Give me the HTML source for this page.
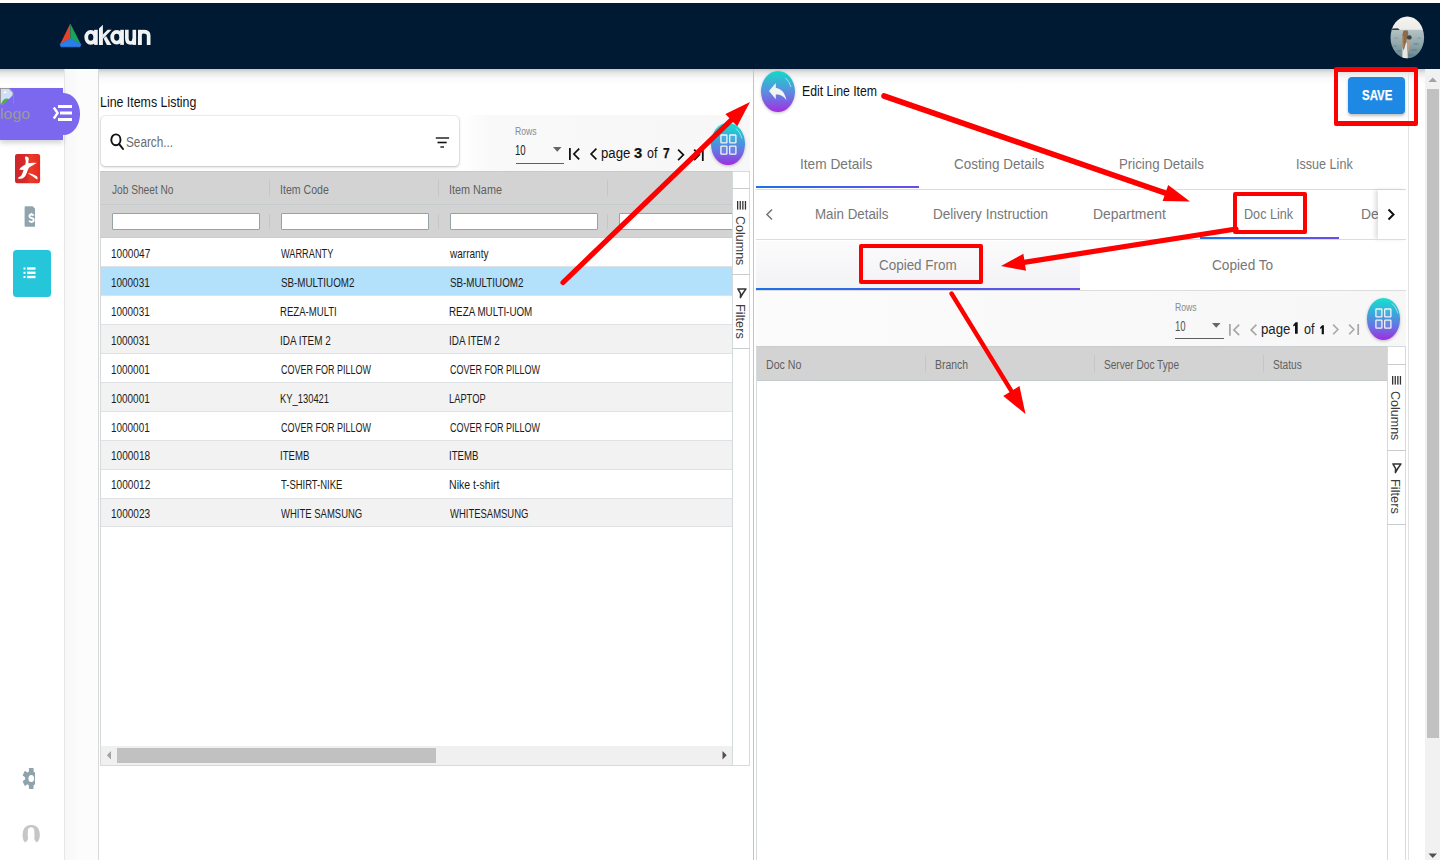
<!DOCTYPE html><html><head><meta charset="utf-8"><style>
html,body{margin:0;padding:0;width:1440px;height:860px;overflow:hidden;background:#fff;font-family:"Liberation Sans",sans-serif;}
body{position:relative;}
</style></head><body>
<div style="position:absolute;left:0px;top:3px;width:1440px;height:66px;background:#011a33;"></div>
<div style="position:absolute;left:0px;top:69px;width:1440px;height:16px;background:linear-gradient(rgba(0,0,0,.22),rgba(0,0,0,.09) 25%,rgba(0,0,0,.02) 60%,rgba(0,0,0,0));"></div>
<svg style="position:absolute;left:58px;top:21px;overflow:visible;" width="26" height="28" viewBox="0 0 26 28">
<polygon points="12.3,2.5 2.1,23.3 12.3,17.8" fill="#e4432b"/>
<polygon points="12.3,2.5 22.9,23.3 12.3,17.8" fill="#1aa35e"/>
<polygon points="2.1,23.3 12.3,17.8 22.9,23.3 22,25.8 3,25.8" fill="#2b7de8" stroke="#2b7de8" stroke-width="0.8" stroke-linejoin="round"/>
</svg>
<svg style="position:absolute;left:0px;top:0px;overflow:visible;" width="1" height="1" viewBox="0 0 1 1"><g fill="none" stroke="#f2f2f2" stroke-width="3.8">
<ellipse cx="90.75" cy="37.35" rx="4.5" ry="5.4"/>
<ellipse cx="116.7" cy="37.3" rx="4.5" ry="5.35"/>
<path d="M126.85 29.8 V38.6 Q126.85 43.05 130.6 43.05 Q134.3 43.05 134.3 38.6" stroke-width="3.6"/>
<path d="M139.8 45 V35.6 Q139.8 31.7 143.4 31.7 Q148.65 31.7 148.65 35.6 V45" stroke-width="3.7"/>
</g><g fill="#f2f2f2">
<rect x="94.1" y="29.8" width="3.65" height="15.1"/>
<polygon points="99,28.6 102.9,24.7 102.9,44.9 99,44.9"/>
<polygon points="102.6,34.8 107.6,29.8 111.6,29.8 102.6,38.9"/>
<polygon points="103.6,38.6 106,36 111.5,44.9 106.9,44.9"/>
<rect x="120.2" y="29.8" width="3.7" height="15.1"/>
<rect x="132.5" y="29.8" width="3.6" height="15.1"/>
<rect x="138" y="29.8" width="3.6" height="15.1"/>
</g></svg>
<svg style="position:absolute;left:1390px;top:16px;overflow:visible;" width="35" height="43" viewBox="0 0 35 43">
<defs><clipPath id="av"><ellipse cx="17.3" cy="21.4" rx="16.8" ry="20.9"/></clipPath>
<linearGradient id="sea" x1="0" y1="0" x2="0" y2="1"><stop offset="0" stop-color="#b4c3c5"/><stop offset="0.45" stop-color="#93a9ad"/><stop offset="1" stop-color="#62808a"/></linearGradient>
<linearGradient id="sky" x1="0" y1="0" x2="0" y2="1"><stop offset="0" stop-color="#f6f4ef"/><stop offset="1" stop-color="#ecebe7"/></linearGradient></defs>
<g clip-path="url(#av)">
<rect x="0" y="0" width="35" height="14" fill="url(#sky)"/>
<rect x="0" y="13.8" width="35" height="30" fill="url(#sea)"/>
<g fill="#5f7d86" opacity="0.55"><ellipse cx="5" cy="30" rx="2.5" ry="0.8"/><ellipse cx="26" cy="28" rx="3" ry="0.9"/><ellipse cx="9" cy="35" rx="3" ry="1"/><ellipse cx="24" cy="34" rx="3.5" ry="1"/><ellipse cx="20" cy="39" rx="4" ry="1.1"/><ellipse cx="29" cy="22" rx="2" ry="0.6"/><ellipse cx="6" cy="22" rx="2" ry="0.6"/></g>
<path d="M1.5 13.9 L2.5 12.6 L8 12.3 L9.8 13.9 Z" fill="#33403c"/>
<path d="M12.8 27 L17.1 27 L17.8 43 L12.2 43 Z" fill="#e9e5e1"/>
<path d="M17 22 Q19.2 24 19.6 26.5 L18.6 35 L17 34 Z" fill="#c49c7c"/>
<path d="M13.3 15 Q15 13.6 17.6 14.5 Q18.6 16 18.1 19 L16.6 24 Q15.2 30 13.6 34.5 Q11.8 30 12 24 Q12.2 18 13.3 15 Z" fill="#8c6c4c"/>
<path d="M12.8 20 Q12.5 26 13.2 31" fill="none" stroke="#c7a47c" stroke-width="0.8"/>
<ellipse cx="19.3" cy="21.4" rx="2.4" ry="2.2" fill="#3a4446"/>
</g></svg>
<div style="position:absolute;left:64px;top:69px;width:1px;height:791px;background:#e6e6e6;"></div>
<div style="position:absolute;left:65px;top:69px;width:33px;height:791px;background:linear-gradient(to right,#f7f7f7,#fdfdfd 55%,#fcfcfc);"></div>
<div style="position:absolute;left:98px;top:69px;width:1px;height:791px;background:#d8d8d8;"></div>
<div style="position:absolute;left:0px;top:88px;width:63px;height:52px;background:#7b68ee;box-shadow:0 3px 5px rgba(0,0,0,.18);"></div>
<div style="position:absolute;left:46.5px;top:93px;width:33px;height:41.5px;border-radius:50%;background:#7b68ee;"></div>
<svg style="position:absolute;left:0px;top:88px;overflow:visible;" width="14" height="17" viewBox="0 0 14 17"><path d="M0.5 0.5 H9 L13 4.5 V16 H0.5 Z" fill="#cfdff5" stroke="#9a9a9a" stroke-width="1"/>
<path d="M1 16 Q4 9 9 11 L13 14 V16 Z" fill="#4caf50"/><path d="M3 5 L5 3 L7 5 Z" fill="#fff"/><path d="M3 17 L13 7 V17 Z" fill="#7b68ee"/></svg>
<div style="position:absolute;left:-0.43px;top:104.60px;font-family:'Liberation Sans',sans-serif;font-size:15.41px;line-height:17px;font-weight:400;color:#9a9a9a;white-space:nowrap;transform:scaleX(1.0327);transform-origin:0 0;">logo</div>
<svg style="position:absolute;left:52px;top:104px;overflow:visible;" width="22" height="18" viewBox="0 0 22 18"><path d="M1.8 3.5 L5.6 9 L1.8 14.5" fill="none" stroke="#fff" stroke-width="2.4"/>
<rect x="6" y="1" width="14" height="3" fill="#fff"/><rect x="8" y="7.5" width="12" height="3" fill="#fff"/><rect x="6" y="14" width="14" height="3" fill="#fff"/></svg>
<svg style="position:absolute;left:15.2px;top:154px;overflow:visible;" width="26" height="30" viewBox="0 0 26 30"><defs><linearGradient id="rg" x1="0" y1="0" x2="1" y2="0"><stop offset="0" stop-color="#cc262d"/><stop offset="0.45" stop-color="#d72a28"/><stop offset="0.62" stop-color="#ec3a28"/><stop offset="1" stop-color="#e52a20"/></linearGradient></defs>
<rect x="0" y="0" width="25.1" height="29.2" rx="2.2" fill="url(#rg)"/>
<path d="M10.6 2.4 C12.5 2.2 14.2 3.4 13.8 5.2 C13.5 6.5 13.2 8 13.6 9.3 C16 8.6 19 8.5 21.8 9.0 C19.5 10.5 16.5 11.8 14.2 13.6 C12.8 15.5 12.2 18 11.2 20.2 C10.2 22.5 8.5 24.6 6.2 24.8 C4.8 24.9 3.6 24.7 2.9 24.4 C3.5 23.2 4.6 22.6 5.8 22.3 C7.2 20.2 8 18 8.6 15.8 C7.2 16 5.6 15.8 4.2 15.4 C6 13.2 8.2 11.8 10.3 10.6 C10.8 8.5 11 6.5 10.2 5 C9.8 4 9.9 3 10.6 2.4 Z" fill="#fff"/>
<path d="M12.8 19.2 C16 19.2 19.8 20.5 22 22.5 C22.8 23.5 22.8 24.8 22.2 25.6 C19 23.5 16 21 12.8 19.2 Z" fill="#fff"/></svg>
<svg style="position:absolute;left:24px;top:206px;overflow:visible;" width="12" height="21" viewBox="0 0 12 21"><path d="M1.8 0.2 H8.6 L11 2.6 V20.8 H1.8 Q0.6 20.8 0.6 19.6 V1.4 Q0.6 0.2 1.8 0.2 Z" fill="#91a4ae"/>
<path d="M9.7 9.6 Q9.2 8.5 7.5 8.5 Q5.4 8.5 5.4 10.2 Q5.4 11.6 7.5 12 Q9.8 12.4 9.8 14.1 Q9.8 15.8 7.5 15.8 Q5.7 15.8 5.1 14.6" fill="none" stroke="#fff" stroke-width="1.8"/>
<rect x="6.8" y="6.9" width="1.5" height="2" fill="#fff"/><rect x="6.8" y="15.4" width="1.5" height="1.6" fill="#fff"/></svg>
<div style="position:absolute;left:13px;top:250px;width:38px;height:46.5px;background:#26c6da;border-radius:3.5px;"></div>
<svg style="position:absolute;left:23px;top:267px;overflow:visible;" width="13" height="12" viewBox="0 0 13 12"><rect x="0.5" y="0.5" width="2" height="2" fill="#fff"/><rect x="0.5" y="4.8" width="2" height="2" fill="#fff"/><rect x="0.5" y="9" width="2" height="2" fill="#fff"/>
<rect x="4" y="0.3" width="8.5" height="2.4" fill="#fff"/><rect x="4" y="4.6" width="8.5" height="2.4" fill="#fff"/><rect x="4" y="8.8" width="8.5" height="2.4" fill="#fff"/></svg>
<svg style="position:absolute;left:0px;top:0px;overflow:visible;" width="1" height="1" viewBox="0 0 1 1"><defs><clipPath id="gc"><rect x="15" y="760" width="19.9" height="40"/></clipPath></defs>
<g clip-path="url(#gc)"><g transform="translate(31.25,778.4) scale(0.83,1)" fill="#8fa3ad">
<circle cx="0" cy="0" r="7.4"/>
<rect x="-2.8" y="-10.5" width="5.6" height="5" rx="0.6"/>
<rect x="-2.8" y="-10.5" width="5.6" height="5" rx="0.6" transform="rotate(60)"/>
<rect x="-2.8" y="-10.5" width="5.6" height="5" rx="0.6" transform="rotate(120)"/>
<rect x="-2.8" y="-10.5" width="5.6" height="5" rx="0.6" transform="rotate(180)"/>
<rect x="-2.8" y="-10.5" width="5.6" height="5" rx="0.6" transform="rotate(240)"/>
<rect x="-2.8" y="-10.5" width="5.6" height="5" rx="0.6" transform="rotate(300)"/>
<ellipse cx="0" cy="0.1" rx="3.4" ry="3.6" fill="#fff"/>
</g></g></svg>
<svg style="position:absolute;left:18px;top:820px;overflow:visible;" width="26" height="28" viewBox="0 0 26 28"><path d="M7 22.6 C4.5 20 4.4 16 4.7 13 C5.5 7 9 5 13.2 5 C17.5 5 21 7 21.7 13 C22 16 21.8 20 19 22.6 C17 21 15.6 19 16.5 16.5 C16.3 13 16.3 11 16.2 10 C15.8 8 14.8 7.2 13.2 7.2 C11.5 7.2 10.2 8 9.9 10 C9.8 11 9.8 13 9.8 16.5 C10.7 19 9.5 21 7 22.6 Z" fill="#c6c6c6"/></svg>
<div style="position:absolute;left:99.91px;top:94.10px;font-family:'Liberation Sans',sans-serif;font-size:14.24px;line-height:16px;font-weight:400;color:#111;white-space:nowrap;transform:scaleX(0.8699);transform-origin:0 0;">Line Items Listing</div>
<div style="position:absolute;left:100px;top:115px;width:650px;height:56px;background:linear-gradient(to right,#fff 360px,#f9f9f9 390px,#f7f7f7);"></div>
<div style="position:absolute;left:101px;top:116px;width:358px;height:50px;background:#fff;border-radius:4.5px;box-shadow:0 0 0 1px rgba(0,0,0,.05),0 1px 3px rgba(0,0,0,.22);"></div>
<svg style="position:absolute;left:110px;top:133px;overflow:visible;" width="16" height="18" viewBox="0 0 16 18"><ellipse cx="5.9" cy="6.8" rx="4.6" ry="5.4" fill="none" stroke="#111" stroke-width="1.9"/><path d="M9.2 11.2 L13 16" stroke="#111" stroke-width="2" stroke-linecap="round"/></svg>
<div style="position:absolute;left:125.87px;top:133.70px;font-family:'Liberation Sans',sans-serif;font-size:14.53px;line-height:16px;font-weight:400;color:#6b6b6b;white-space:nowrap;transform:scaleX(0.8099);transform-origin:0 0;">Search...</div>
<svg style="position:absolute;left:435px;top:136px;overflow:visible;" width="15" height="13" viewBox="0 0 15 13"><rect x="0.8" y="1.2" width="13.3" height="1.6" fill="#333"/><rect x="2.5" y="5.7" width="9.2" height="1.6" fill="#111"/><rect x="5.4" y="10.2" width="3.6" height="1.6" fill="#333"/></svg>
<div style="position:absolute;left:515.31px;top:126.10px;font-family:'Liberation Sans',sans-serif;font-size:10.32px;line-height:11px;font-weight:400;color:#8a8a8a;white-space:nowrap;transform:scaleX(0.8410);transform-origin:0 0;">Rows</div>
<div style="position:absolute;left:515.28px;top:141.90px;font-family:'Liberation Sans',sans-serif;font-size:14.39px;line-height:16px;font-weight:400;color:#222;white-space:nowrap;transform:scaleX(0.6672);transform-origin:0 0;">10</div>
<div style="position:absolute;left:516px;top:162.9px;width:48.3px;height:1.2px;background:#5f5f5f;"></div>
<svg style="position:absolute;left:552.7px;top:147.2px;overflow:visible;" width="9" height="5" viewBox="0 0 9 5"><path d="M0 0 H8.5 L4.25 4.7 Z" fill="#666"/></svg>
<svg style="position:absolute;left:569.4px;top:148.3px;overflow:visible;" width="12" height="12.0" viewBox="0 0 12 12.0"><path d="M0.9 0 V12.0" stroke="#111" stroke-width="1.8"/><path d="M10.2 0.6 L4.9 6.0 L10.2 11.4" fill="none" stroke="#111" stroke-width="1.7"/></svg>
<svg style="position:absolute;left:589.5px;top:148.3px;overflow:visible;" width="8" height="12.0" viewBox="0 0 8 12.0"><path d="M6.4 0.6 L1.1 6.0 L6.4 11.4" fill="none" stroke="#111" stroke-width="1.7"/></svg>
<div style="position:absolute;left:601.34px;top:145.30px;font-family:'Liberation Sans',sans-serif;font-size:14.39px;line-height:16px;font-weight:400;color:#111;white-space:nowrap;transform:scaleX(0.9165);transform-origin:0 0;">page</div>
<div style="position:absolute;left:633.53px;top:145.30px;font-family:'Liberation Sans',sans-serif;font-size:14.39px;line-height:16px;font-weight:700;color:#111;white-space:nowrap;transform:scaleX(1.0249);transform-origin:0 0;-webkit-text-stroke:0.25px #111;">3</div>
<div style="position:absolute;left:646.80px;top:145.30px;font-family:'Liberation Sans',sans-serif;font-size:14.83px;line-height:16px;font-weight:400;color:#111;white-space:nowrap;transform:scaleX(0.8400);transform-origin:0 0;">of</div>
<div style="position:absolute;left:663.22px;top:145.30px;font-family:'Liberation Sans',sans-serif;font-size:14.10px;line-height:16px;font-weight:700;color:#111;white-space:nowrap;transform:scaleX(0.8511);transform-origin:0 0;-webkit-text-stroke:0.25px #111;">7</div>
<svg style="position:absolute;left:676.5px;top:148.5px;overflow:visible;" width="8" height="12" viewBox="0 0 8 12"><path d="M1.1 0.6 L6.4 5.85 L1.1 11.1" fill="none" stroke="#111" stroke-width="1.7"/></svg>
<svg style="position:absolute;left:692.8px;top:148.5px;overflow:visible;" width="12" height="12" viewBox="0 0 12 12"><path d="M1.1 0.6 L6.4 5.85 L1.1 11.1" fill="none" stroke="#111" stroke-width="1.7"/><path d="M9.8 0 V12" stroke="#111" stroke-width="1.8"/></svg>
<div style="position:absolute;left:711.3px;top:123.2px;width:33.4px;height:41.6px;border-radius:50%;background:linear-gradient(#12e2cf,#3fa2dc 40%,#6a6fe3 70%,#a02de0);box-shadow:0 1px 3px rgba(0,0,0,.25);"></div>
<svg style="position:absolute;left:717px;top:132.5px;overflow:visible;" width="22" height="23" viewBox="0 0 22 23"><g fill="rgba(255,255,255,.08)" stroke="#f4f4f4" stroke-width="1.3"><rect x="3.9" y="2" width="6" height="7.8" rx="0.6"/><rect x="12.7" y="2" width="6.2" height="7.8" rx="0.6"/><rect x="3.9" y="13.2" width="6" height="8" rx="0.6"/><rect x="12.7" y="13.2" width="6.2" height="8" rx="0.6"/></g></svg>
<svg style="position:absolute;left:711.3px;top:123.2px;overflow:visible;" width="34" height="42" viewBox="0 0 34 42"><path d="M25 5.5 Q29.5 9.5 31 15.5" fill="none" stroke="rgba(255,255,255,.5)" stroke-width="1"/></svg>
<div style="position:absolute;left:100px;top:171px;width:632px;height:595px;background:#fff;border-left:1px solid #d5dadd;border-bottom:1px solid #d5dadd;box-sizing:border-box;"></div>
<div style="position:absolute;left:100px;top:171px;width:632px;height:34px;background:#d3d3d3;border-top:1px solid #c6cacd;border-bottom:1px solid #c6cbce;box-sizing:border-box;"></div>
<div style="position:absolute;left:100px;top:205px;width:632px;height:33px;background:#d3d3d3;border-bottom:1px solid #c9cdd0;box-sizing:border-box;"></div>
<div style="position:absolute;left:111.85px;top:181.50px;font-family:'Liberation Sans',sans-serif;font-size:13.23px;line-height:15px;font-weight:400;color:#5f5f5f;white-space:nowrap;transform:scaleX(0.7680);transform-origin:0 0;">Job Sheet No</div>
<div style="position:absolute;left:112px;top:213px;width:148px;height:16.7px;background:#fff;border:1px solid #95a3a6;box-sizing:border-box;border-radius:1px;"></div>
<div style="position:absolute;left:268.5px;top:180px;width:1px;height:16px;background:#c6c6c6;"></div>
<div style="position:absolute;left:268.5px;top:214px;width:1px;height:15px;background:#c6c6c6;"></div>
<div style="position:absolute;left:280.05px;top:181.50px;font-family:'Liberation Sans',sans-serif;font-size:13.23px;line-height:15px;font-weight:400;color:#5f5f5f;white-space:nowrap;transform:scaleX(0.8008);transform-origin:0 0;">Item Code</div>
<div style="position:absolute;left:281px;top:213px;width:148px;height:16.7px;background:#fff;border:1px solid #95a3a6;box-sizing:border-box;border-radius:1px;"></div>
<div style="position:absolute;left:437.5px;top:180px;width:1px;height:16px;background:#c6c6c6;"></div>
<div style="position:absolute;left:437.5px;top:214px;width:1px;height:15px;background:#c6c6c6;"></div>
<div style="position:absolute;left:449.03px;top:181.50px;font-family:'Liberation Sans',sans-serif;font-size:13.23px;line-height:15px;font-weight:400;color:#5f5f5f;white-space:nowrap;transform:scaleX(0.8188);transform-origin:0 0;">Item Name</div>
<div style="position:absolute;left:450px;top:213px;width:148px;height:16.7px;background:#fff;border:1px solid #95a3a6;box-sizing:border-box;border-radius:1px;"></div>
<div style="position:absolute;left:606.5px;top:180px;width:1px;height:16px;background:#c6c6c6;"></div>
<div style="position:absolute;left:606.5px;top:214px;width:1px;height:15px;background:#c6c6c6;"></div>
<div style="position:absolute;left:619px;top:213px;width:115px;height:16.7px;background:#fff;border:1px solid #95a3a6;box-sizing:border-box;border-radius:1px;"></div>
<div style="position:absolute;left:101px;top:238.0px;width:631px;height:28.95px;background:#fff;border-bottom:1px solid #dfe2e4;box-sizing:border-box;"></div>
<div style="position:absolute;left:111.44px;top:245.80px;font-family:'Liberation Sans',sans-serif;font-size:13.37px;line-height:15px;font-weight:400;color:#1b1b1b;white-space:nowrap;transform:scaleX(0.7548);transform-origin:0 0;">1000047</div>
<div style="position:absolute;left:281.15px;top:245.80px;font-family:'Liberation Sans',sans-serif;font-size:13.37px;line-height:15px;font-weight:400;color:#1b1b1b;white-space:nowrap;transform:scaleX(0.6884);transform-origin:0 0;">WARRANTY</div>
<div style="position:absolute;left:450.20px;top:245.80px;font-family:'Liberation Sans',sans-serif;font-size:13.37px;line-height:15px;font-weight:400;color:#1b1b1b;white-space:nowrap;transform:scaleX(0.7508);transform-origin:0 0;">warranty</div>
<div style="position:absolute;left:101px;top:266.95px;width:631px;height:28.95px;background:#b3e0fb;border-bottom:1px solid #dfe2e4;box-sizing:border-box;"></div>
<div style="position:absolute;left:111.45px;top:274.75px;font-family:'Liberation Sans',sans-serif;font-size:13.37px;line-height:15px;font-weight:400;color:#1b1b1b;white-space:nowrap;transform:scaleX(0.7439);transform-origin:0 0;">1000031</div>
<div style="position:absolute;left:280.76px;top:274.75px;font-family:'Liberation Sans',sans-serif;font-size:13.37px;line-height:15px;font-weight:400;color:#1b1b1b;white-space:nowrap;transform:scaleX(0.7342);transform-origin:0 0;">SB-MULTIUOM2</div>
<div style="position:absolute;left:449.76px;top:274.75px;font-family:'Liberation Sans',sans-serif;font-size:13.37px;line-height:15px;font-weight:400;color:#1b1b1b;white-space:nowrap;transform:scaleX(0.7342);transform-origin:0 0;">SB-MULTIUOM2</div>
<div style="position:absolute;left:101px;top:295.9px;width:631px;height:28.95px;background:#fff;border-bottom:1px solid #dfe2e4;box-sizing:border-box;"></div>
<div style="position:absolute;left:111.45px;top:303.70px;font-family:'Liberation Sans',sans-serif;font-size:13.37px;line-height:15px;font-weight:400;color:#1b1b1b;white-space:nowrap;transform:scaleX(0.7439);transform-origin:0 0;">1000031</div>
<div style="position:absolute;left:280.43px;top:303.70px;font-family:'Liberation Sans',sans-serif;font-size:13.37px;line-height:15px;font-weight:400;color:#1b1b1b;white-space:nowrap;transform:scaleX(0.7173);transform-origin:0 0;">REZA-MULTI</div>
<div style="position:absolute;left:449.41px;top:303.70px;font-family:'Liberation Sans',sans-serif;font-size:13.37px;line-height:15px;font-weight:400;color:#1b1b1b;white-space:nowrap;transform:scaleX(0.7352);transform-origin:0 0;">REZA MULTI-UOM</div>
<div style="position:absolute;left:101px;top:324.85px;width:631px;height:28.95px;background:#f2f2f2;border-bottom:1px solid #dfe2e4;box-sizing:border-box;"></div>
<div style="position:absolute;left:111.45px;top:332.65px;font-family:'Liberation Sans',sans-serif;font-size:13.37px;line-height:15px;font-weight:400;color:#1b1b1b;white-space:nowrap;transform:scaleX(0.7439);transform-origin:0 0;">1000031</div>
<div style="position:absolute;left:280.31px;top:332.65px;font-family:'Liberation Sans',sans-serif;font-size:13.37px;line-height:15px;font-weight:400;color:#1b1b1b;white-space:nowrap;transform:scaleX(0.7433);transform-origin:0 0;">IDA ITEM 2</div>
<div style="position:absolute;left:449.31px;top:332.65px;font-family:'Liberation Sans',sans-serif;font-size:13.37px;line-height:15px;font-weight:400;color:#1b1b1b;white-space:nowrap;transform:scaleX(0.7433);transform-origin:0 0;">IDA ITEM 2</div>
<div style="position:absolute;left:101px;top:353.8px;width:631px;height:28.95px;background:#fff;border-bottom:1px solid #dfe2e4;box-sizing:border-box;"></div>
<div style="position:absolute;left:111.45px;top:361.60px;font-family:'Liberation Sans',sans-serif;font-size:13.37px;line-height:15px;font-weight:400;color:#1b1b1b;white-space:nowrap;transform:scaleX(0.7439);transform-origin:0 0;">1000001</div>
<div style="position:absolute;left:280.75px;top:361.60px;font-family:'Liberation Sans',sans-serif;font-size:13.37px;line-height:15px;font-weight:400;color:#1b1b1b;white-space:nowrap;transform:scaleX(0.6734);transform-origin:0 0;">COVER FOR PILLOW</div>
<div style="position:absolute;left:449.75px;top:361.60px;font-family:'Liberation Sans',sans-serif;font-size:13.37px;line-height:15px;font-weight:400;color:#1b1b1b;white-space:nowrap;transform:scaleX(0.6734);transform-origin:0 0;">COVER FOR PILLOW</div>
<div style="position:absolute;left:101px;top:382.75px;width:631px;height:28.95px;background:#f2f2f2;border-bottom:1px solid #dfe2e4;box-sizing:border-box;"></div>
<div style="position:absolute;left:111.45px;top:390.55px;font-family:'Liberation Sans',sans-serif;font-size:13.37px;line-height:15px;font-weight:400;color:#1b1b1b;white-space:nowrap;transform:scaleX(0.7439);transform-origin:0 0;">1000001</div>
<div style="position:absolute;left:280.45px;top:390.55px;font-family:'Liberation Sans',sans-serif;font-size:13.37px;line-height:15px;font-weight:400;color:#1b1b1b;white-space:nowrap;transform:scaleX(0.7024);transform-origin:0 0;">KY_130421</div>
<div style="position:absolute;left:449.45px;top:390.55px;font-family:'Liberation Sans',sans-serif;font-size:13.37px;line-height:15px;font-weight:400;color:#1b1b1b;white-space:nowrap;transform:scaleX(0.6976);transform-origin:0 0;">LAPTOP</div>
<div style="position:absolute;left:101px;top:411.7px;width:631px;height:28.95px;background:#fff;border-bottom:1px solid #dfe2e4;box-sizing:border-box;"></div>
<div style="position:absolute;left:111.45px;top:419.50px;font-family:'Liberation Sans',sans-serif;font-size:13.37px;line-height:15px;font-weight:400;color:#1b1b1b;white-space:nowrap;transform:scaleX(0.7439);transform-origin:0 0;">1000001</div>
<div style="position:absolute;left:280.75px;top:419.50px;font-family:'Liberation Sans',sans-serif;font-size:13.37px;line-height:15px;font-weight:400;color:#1b1b1b;white-space:nowrap;transform:scaleX(0.6734);transform-origin:0 0;">COVER FOR PILLOW</div>
<div style="position:absolute;left:449.75px;top:419.50px;font-family:'Liberation Sans',sans-serif;font-size:13.37px;line-height:15px;font-weight:400;color:#1b1b1b;white-space:nowrap;transform:scaleX(0.6734);transform-origin:0 0;">COVER FOR PILLOW</div>
<div style="position:absolute;left:101px;top:440.65px;width:631px;height:28.95px;background:#f2f2f2;border-bottom:1px solid #dfe2e4;box-sizing:border-box;"></div>
<div style="position:absolute;left:111.45px;top:448.45px;font-family:'Liberation Sans',sans-serif;font-size:13.37px;line-height:15px;font-weight:400;color:#1b1b1b;white-space:nowrap;transform:scaleX(0.7528);transform-origin:0 0;">1000018</div>
<div style="position:absolute;left:280.33px;top:448.45px;font-family:'Liberation Sans',sans-serif;font-size:13.37px;line-height:15px;font-weight:400;color:#1b1b1b;white-space:nowrap;transform:scaleX(0.7209);transform-origin:0 0;">ITEMB</div>
<div style="position:absolute;left:449.33px;top:448.45px;font-family:'Liberation Sans',sans-serif;font-size:13.37px;line-height:15px;font-weight:400;color:#1b1b1b;white-space:nowrap;transform:scaleX(0.7209);transform-origin:0 0;">ITEMB</div>
<div style="position:absolute;left:101px;top:469.6px;width:631px;height:28.95px;background:#fff;border-bottom:1px solid #dfe2e4;box-sizing:border-box;"></div>
<div style="position:absolute;left:111.44px;top:477.40px;font-family:'Liberation Sans',sans-serif;font-size:13.37px;line-height:15px;font-weight:400;color:#1b1b1b;white-space:nowrap;transform:scaleX(0.7548);transform-origin:0 0;">1000012</div>
<div style="position:absolute;left:281.01px;top:477.40px;font-family:'Liberation Sans',sans-serif;font-size:13.37px;line-height:15px;font-weight:400;color:#1b1b1b;white-space:nowrap;transform:scaleX(0.7082);transform-origin:0 0;">T-SHIRT-NIKE</div>
<div style="position:absolute;left:449.35px;top:477.40px;font-family:'Liberation Sans',sans-serif;font-size:13.37px;line-height:15px;font-weight:400;color:#1b1b1b;white-space:nowrap;transform:scaleX(0.7909);transform-origin:0 0;">Nike t-shirt</div>
<div style="position:absolute;left:101px;top:498.55px;width:631px;height:28.95px;background:#f2f2f2;border-bottom:1px solid #dfe2e4;box-sizing:border-box;"></div>
<div style="position:absolute;left:111.45px;top:506.35px;font-family:'Liberation Sans',sans-serif;font-size:13.37px;line-height:15px;font-weight:400;color:#1b1b1b;white-space:nowrap;transform:scaleX(0.7528);transform-origin:0 0;">1000023</div>
<div style="position:absolute;left:281.15px;top:506.35px;font-family:'Liberation Sans',sans-serif;font-size:13.37px;line-height:15px;font-weight:400;color:#1b1b1b;white-space:nowrap;transform:scaleX(0.7108);transform-origin:0 0;">WHITE SAMSUNG</div>
<div style="position:absolute;left:450.15px;top:506.35px;font-family:'Liberation Sans',sans-serif;font-size:13.37px;line-height:15px;font-weight:400;color:#1b1b1b;white-space:nowrap;transform:scaleX(0.7086);transform-origin:0 0;">WHITESAMSUNG</div>
<div style="position:absolute;left:101px;top:746px;width:631px;height:18.5px;background:#f0f0f0;"></div>
<div style="position:absolute;left:117px;top:748px;width:319px;height:15px;background:#c1c1c1;"></div>
<svg style="position:absolute;left:106px;top:751px;overflow:visible;" width="6" height="9" viewBox="0 0 6 9"><path d="M5 0 V8.5 L0.8 4.25 Z" fill="#a3a3a3"/></svg>
<svg style="position:absolute;left:721.5px;top:751px;overflow:visible;" width="6" height="9" viewBox="0 0 6 9"><path d="M0.5 0 V8.5 L4.7 4.25 Z" fill="#505050"/></svg>
<div style="position:absolute;left:732px;top:171px;width:18px;height:595px;background:#fff;border-left:1px solid #d5dadd;border-right:1px solid #d5dadd;border-bottom:1px solid #d5dadd;box-sizing:border-box;"></div>
<div style="position:absolute;left:732px;top:171px;width:18px;height:1px;background:#d5dadd;"></div>
<div style="position:absolute;left:732px;top:188px;width:18px;height:1px;background:#c9cdd0;"></div>
<div style="position:absolute;left:732px;top:274px;width:18px;height:1px;background:#c9cdd0;"></div>
<div style="position:absolute;left:732px;top:348px;width:18px;height:1px;background:#c9cdd0;"></div>
<svg style="position:absolute;left:736.7px;top:201.2px;overflow:visible;" width="10" height="9" viewBox="0 0 10 9"><g fill="#333"><rect x="0" y="0" width="1.3" height="8.6"/><rect x="2.6" y="0" width="1.3" height="8.6"/><rect x="5.2" y="0" width="1.3" height="8.6"/><rect x="7.8" y="0" width="1.3" height="8.6"/></g></svg>
<div style="position:absolute;left:748.20px;top:216.37px;font-family:Liberation Sans;font-size:13.08px;line-height:15px;font-weight:400;color:#3c3c3c;white-space:nowrap;transform-origin:0 0;transform:rotate(90deg) scaleX(0.9565);">Columns</div>
<svg style="position:absolute;left:736.5px;top:288px;overflow:visible;" width="10" height="11" viewBox="0 0 10 11"><path d="M0.9 0.9 H9 L5.6 5.8 L3.4 9.6 L3.6 5.6 Z" fill="none" stroke="#333" stroke-width="1.5" stroke-linejoin="round"/></svg>
<div style="position:absolute;left:748.20px;top:304.38px;font-family:Liberation Sans;font-size:13.08px;line-height:15px;font-weight:400;color:#3c3c3c;white-space:nowrap;transform-origin:0 0;transform:rotate(90deg) scaleX(0.9772);">Filters</div>
<div style="position:absolute;left:753px;top:69px;width:1px;height:791px;background:#c4c4c4;"></div>
<div style="position:absolute;left:1408px;top:69px;width:1px;height:791px;background:#e3e3e3;"></div>
<div style="position:absolute;left:761px;top:71.3px;width:33.8px;height:41.2px;border-radius:50%;background:linear-gradient(#13d9c8,#5a8ee0 50%,#a22fe2);box-shadow:0 1px 3px rgba(0,0,0,.25);"></div>
<svg style="position:absolute;left:768.5px;top:83px;overflow:visible;" width="19" height="18" viewBox="0 0 19 18"><path transform="translate(-2.9,-5.7) scale(0.97,1.15)" d="M10 9V5l-7 7 7 7v-4.1c5 0 8.5 1.6 11 5.1-1-5-4-10-11-11z" fill="#f4f4f4"/></svg>
<svg style="position:absolute;left:761.3px;top:71.3px;overflow:visible;" width="34" height="41" viewBox="0 0 34 41"><path d="M24.5 7 Q28.5 10.5 30 16" fill="none" stroke="rgba(255,255,255,.55)" stroke-width="1"/></svg>
<div style="position:absolute;left:801.62px;top:83.00px;font-family:'Liberation Sans',sans-serif;font-size:13.95px;line-height:16px;font-weight:400;color:#111;white-space:nowrap;transform:scaleX(0.8811);transform-origin:0 0;">Edit Line Item</div>
<div style="position:absolute;left:1348.4px;top:76.7px;width:56.3px;height:37.1px;background:#1e88e5;border-radius:4px;box-shadow:0 2px 3px rgba(0,0,0,.25);"></div>
<div style="position:absolute;left:1361.56px;top:87.00px;font-family:'Liberation Sans',sans-serif;font-size:14.83px;line-height:16px;font-weight:700;color:#fff;white-space:nowrap;transform:scaleX(0.7712);transform-origin:0 0;-webkit-text-stroke:0.25px #fff;">SAVE</div>
<div style="position:absolute;left:800.17px;top:154.80px;font-family:'Liberation Sans',sans-serif;font-size:14.97px;line-height:17px;font-weight:400;color:#777;white-space:nowrap;transform:scaleX(0.9148);transform-origin:0 0;">Item Details</div>
<div style="position:absolute;left:954.13px;top:154.80px;font-family:'Liberation Sans',sans-serif;font-size:14.97px;line-height:17px;font-weight:400;color:#777;white-space:nowrap;transform:scaleX(0.8973);transform-origin:0 0;">Costing Details</div>
<div style="position:absolute;left:1118.94px;top:154.80px;font-family:'Liberation Sans',sans-serif;font-size:14.97px;line-height:17px;font-weight:400;color:#777;white-space:nowrap;transform:scaleX(0.8867);transform-origin:0 0;">Pricing Details</div>
<div style="position:absolute;left:1295.57px;top:154.80px;font-family:'Liberation Sans',sans-serif;font-size:14.97px;line-height:17px;font-weight:400;color:#777;white-space:nowrap;transform:scaleX(0.8412);transform-origin:0 0;">Issue Link</div>
<div style="position:absolute;left:755.5px;top:189px;width:650px;height:1px;background:#dcdcdc;"></div>
<div style="position:absolute;left:755.5px;top:186.3px;width:163px;height:2.2px;background:linear-gradient(to right,#1a73e8,#6a4ee9);"></div>
<svg style="position:absolute;left:765px;top:208px;overflow:visible;" width="9" height="13" viewBox="0 0 9 13"><path d="M7 1.5 L2 6.5 L7 11.5" fill="none" stroke="#777" stroke-width="1.6"/></svg>
<div style="position:absolute;left:814.93px;top:206.00px;font-family:'Liberation Sans',sans-serif;font-size:14.53px;line-height:16px;font-weight:400;color:#777;white-space:nowrap;transform:scaleX(0.9199);transform-origin:0 0;">Main Details</div>
<div style="position:absolute;left:933.32px;top:206.00px;font-family:'Liberation Sans',sans-serif;font-size:14.53px;line-height:16px;font-weight:400;color:#777;white-space:nowrap;transform:scaleX(0.9322);transform-origin:0 0;">Delivery Instruction</div>
<div style="position:absolute;left:1093.08px;top:206.00px;font-family:'Liberation Sans',sans-serif;font-size:14.53px;line-height:16px;font-weight:400;color:#777;white-space:nowrap;transform:scaleX(0.9593);transform-origin:0 0;">Department</div>
<div style="position:absolute;left:1243.59px;top:206.00px;font-family:'Liberation Sans',sans-serif;font-size:14.53px;line-height:16px;font-weight:400;color:#777;white-space:nowrap;transform:scaleX(0.8704);transform-origin:0 0;">Doc Link</div>
<div style="position:absolute;left:1340px;top:190px;width:37.5px;height:49px;overflow:hidden;">
<div style="position:absolute;left:20.88px;top:16.00px;font-family:'Liberation Sans',sans-serif;font-size:14.53px;line-height:16px;font-weight:400;color:#777;white-space:nowrap;transform:scaleX(0.9593);transform-origin:0 0;">Department</div>
</div>
<div style="position:absolute;left:1377.5px;top:190px;width:28px;height:49px;background:#fff;box-shadow:-3px 0 4px rgba(0,0,0,.12);"></div>
<svg style="position:absolute;left:1386px;top:208px;overflow:visible;" width="10" height="13" viewBox="0 0 10 13"><path d="M2.5 1.5 L7.5 6.5 L2.5 11.5" fill="none" stroke="#111" stroke-width="2"/></svg>
<div style="position:absolute;left:755.5px;top:239.3px;width:650px;height:1px;background:#dcdcdc;"></div>
<div style="position:absolute;left:1200px;top:236.9px;width:139px;height:2.2px;background:linear-gradient(to right,#1a73e8,#6a4ee9);"></div>
<div style="position:absolute;left:755.5px;top:240.5px;width:324.5px;height:47.5px;background:linear-gradient(#fbfbfc,#f3f3f6);"></div>
<div style="position:absolute;left:879.13px;top:256.20px;font-family:'Liberation Sans',sans-serif;font-size:15.26px;line-height:17px;font-weight:400;color:#777;white-space:nowrap;transform:scaleX(0.8814);transform-origin:0 0;">Copied From</div>
<div style="position:absolute;left:1212.32px;top:255.90px;font-family:'Liberation Sans',sans-serif;font-size:15.26px;line-height:17px;font-weight:400;color:#777;white-space:nowrap;transform:scaleX(0.8945);transform-origin:0 0;">Copied To</div>
<div style="position:absolute;left:755.5px;top:290px;width:650px;height:1px;background:#dcdcdc;"></div>
<div style="position:absolute;left:755.5px;top:287.8px;width:324.5px;height:2.2px;background:linear-gradient(to right,#1a73e8,#6a4ee9);"></div>
<div style="position:absolute;left:756px;top:291px;width:650px;height:55px;background:linear-gradient(to right,#fbfbfb,#f7f7f7);"></div>
<div style="position:absolute;left:1174.71px;top:301.50px;font-family:'Liberation Sans',sans-serif;font-size:10.32px;line-height:11px;font-weight:400;color:#8a8a8a;white-space:nowrap;transform:scaleX(0.8410);transform-origin:0 0;">Rows</div>
<div style="position:absolute;left:1174.68px;top:317.50px;font-family:'Liberation Sans',sans-serif;font-size:14.39px;line-height:16px;font-weight:400;color:#555;white-space:nowrap;transform:scaleX(0.6672);transform-origin:0 0;">10</div>
<div style="position:absolute;left:1175.4px;top:337.8px;width:48.3px;height:1.2px;background:#5f5f5f;"></div>
<svg style="position:absolute;left:1212px;top:323.3px;overflow:visible;" width="9" height="5" viewBox="0 0 9 5"><path d="M0 0 H8.5 L4.25 4.7 Z" fill="#666"/></svg>
<svg style="position:absolute;left:1229px;top:324px;overflow:visible;" width="12" height="11.800000000000011" viewBox="0 0 12 11.800000000000011"><path d="M0.9 0 V11.800000000000011" stroke="#a8a8a8" stroke-width="1.8"/><path d="M10.2 0.6 L4.9 5.900000000000006 L10.2 11.200000000000012" fill="none" stroke="#a8a8a8" stroke-width="1.7"/></svg>
<svg style="position:absolute;left:1249.9px;top:324px;overflow:visible;" width="8" height="11.800000000000011" viewBox="0 0 8 11.800000000000011"><path d="M6.4 0.6 L1.1 5.900000000000006 L6.4 11.200000000000012" fill="none" stroke="#a8a8a8" stroke-width="1.7"/></svg>
<div style="position:absolute;left:1260.84px;top:320.80px;font-family:'Liberation Sans',sans-serif;font-size:14.58px;line-height:16px;font-weight:400;color:#222;white-space:nowrap;transform:scaleX(0.9078);transform-origin:0 0;">page</div>
<svg style="position:absolute;left:1293px;top:322px;overflow:visible;" width="5" height="12" viewBox="0 0 5 12"><path d="M0.2 2.9 L2.6 0.3 H4.7 V11.8 H2 V3.6 L0.2 4.6 Z" fill="#111"/></svg>
<div style="position:absolute;left:1303.70px;top:320.80px;font-family:'Liberation Sans',sans-serif;font-size:14.83px;line-height:16px;font-weight:400;color:#222;white-space:nowrap;transform:scaleX(0.8484);transform-origin:0 0;">of</div>
<svg style="position:absolute;left:1320.2px;top:324.5px;overflow:visible;" width="4" height="9.5" viewBox="0 0 4 9.5"><path d="M0.1 2.4 L2.1 0.2 H3.9 V9.3 H1.7 V3 L0.1 3.9 Z" fill="#111"/></svg>
<svg style="position:absolute;left:1331.8px;top:324.4px;overflow:visible;" width="8" height="11" viewBox="0 0 8 11"><path d="M1.1 0.6 L5.9 5.45 L1.1 10.3" fill="none" stroke="#a8a8a8" stroke-width="1.6"/></svg>
<svg style="position:absolute;left:1347.8px;top:324.4px;overflow:visible;" width="12" height="11.5" viewBox="0 0 12 11.5"><path d="M1.1 0.6 L5.9 5.45 L1.1 10.3" fill="none" stroke="#a8a8a8" stroke-width="1.6"/><path d="M10.2 0 V11" stroke="#a8a8a8" stroke-width="1.8"/></svg>
<div style="position:absolute;left:1366.7px;top:298.0px;width:33.4px;height:41.6px;border-radius:50%;background:linear-gradient(#12e2cf,#3fa2dc 40%,#6a6fe3 70%,#a02de0);box-shadow:0 1px 3px rgba(0,0,0,.25);"></div>
<svg style="position:absolute;left:1372.4px;top:307.3px;overflow:visible;" width="22" height="23" viewBox="0 0 22 23"><g fill="rgba(255,255,255,.08)" stroke="#f4f4f4" stroke-width="1.3"><rect x="3.9" y="2" width="6" height="7.8" rx="0.6"/><rect x="12.7" y="2" width="6.2" height="7.8" rx="0.6"/><rect x="3.9" y="13.2" width="6" height="8" rx="0.6"/><rect x="12.7" y="13.2" width="6.2" height="8" rx="0.6"/></g></svg>
<svg style="position:absolute;left:1366.7px;top:298.0px;overflow:visible;" width="34" height="42" viewBox="0 0 34 42"><path d="M25 5.5 Q29.5 9.5 31 15.5" fill="none" stroke="rgba(255,255,255,.5)" stroke-width="1"/></svg>
<div style="position:absolute;left:756px;top:346px;width:632px;height:514px;background:#fff;border-left:1px solid #d5dadd;border-top:1px solid #c9cdd0;box-sizing:border-box;"></div>
<div style="position:absolute;left:757px;top:347px;width:631px;height:33.5px;background:#d3d3d3;border-bottom:1px solid #c6cbce;box-sizing:border-box;"></div>
<div style="position:absolute;left:765.85px;top:357.90px;font-family:'Liberation Sans',sans-serif;font-size:12.50px;line-height:14px;font-weight:400;color:#5f5f5f;white-space:nowrap;transform:scaleX(0.8485);transform-origin:0 0;">Doc No</div>
<div style="position:absolute;left:924.5px;top:355px;width:1px;height:17px;background:#c6c6c6;"></div>
<div style="position:absolute;left:934.87px;top:357.90px;font-family:'Liberation Sans',sans-serif;font-size:12.50px;line-height:14px;font-weight:400;color:#5f5f5f;white-space:nowrap;transform:scaleX(0.8318);transform-origin:0 0;">Branch</div>
<div style="position:absolute;left:1093.5px;top:355px;width:1px;height:17px;background:#c6c6c6;"></div>
<div style="position:absolute;left:1104.25px;top:357.90px;font-family:'Liberation Sans',sans-serif;font-size:12.50px;line-height:14px;font-weight:400;color:#5f5f5f;white-space:nowrap;transform:scaleX(0.8076);transform-origin:0 0;">Server Doc Type</div>
<div style="position:absolute;left:1262.5px;top:355px;width:1px;height:17px;background:#c6c6c6;"></div>
<div style="position:absolute;left:1273.24px;top:357.90px;font-family:'Liberation Sans',sans-serif;font-size:12.50px;line-height:14px;font-weight:400;color:#5f5f5f;white-space:nowrap;transform:scaleX(0.8102);transform-origin:0 0;">Status</div>
<div style="position:absolute;left:1387px;top:346px;width:18.5px;height:514px;background:#fff;border-left:1px solid #d5dadd;border-right:1px solid #d5dadd;border-top:1px solid #d5dadd;box-sizing:border-box;"></div>
<div style="position:absolute;left:1387px;top:363.5px;width:18.5px;height:1px;background:#c9cdd0;"></div>
<div style="position:absolute;left:1387px;top:449.5px;width:18.5px;height:1px;background:#c9cdd0;"></div>
<div style="position:absolute;left:1387px;top:523.5px;width:18.5px;height:1px;background:#c9cdd0;"></div>
<svg style="position:absolute;left:1391.7px;top:376.2px;overflow:visible;" width="10" height="9" viewBox="0 0 10 9"><g fill="#333"><rect x="0" y="0" width="1.3" height="8.6"/><rect x="2.6" y="0" width="1.3" height="8.6"/><rect x="5.2" y="0" width="1.3" height="8.6"/><rect x="7.8" y="0" width="1.3" height="8.6"/></g></svg>
<div style="position:absolute;left:1403.20px;top:391.37px;font-family:Liberation Sans;font-size:13.08px;line-height:15px;font-weight:400;color:#3c3c3c;white-space:nowrap;transform-origin:0 0;transform:rotate(90deg) scaleX(0.9565);">Columns</div>
<svg style="position:absolute;left:1391.5px;top:463px;overflow:visible;" width="10" height="11" viewBox="0 0 10 11"><path d="M0.9 0.9 H9 L5.6 5.8 L3.4 9.6 L3.6 5.6 Z" fill="none" stroke="#333" stroke-width="1.5" stroke-linejoin="round"/></svg>
<div style="position:absolute;left:1403.20px;top:479.38px;font-family:Liberation Sans;font-size:13.08px;line-height:15px;font-weight:400;color:#3c3c3c;white-space:nowrap;transform-origin:0 0;transform:rotate(90deg) scaleX(0.9772);">Filters</div>
<div style="position:absolute;left:1425px;top:69px;width:15px;height:791px;background:#f1f1f1;"></div>
<div style="position:absolute;left:1426.7px;top:88.6px;width:12px;height:649.6px;background:#c1c1c1;"></div>
<svg style="position:absolute;left:1428px;top:77px;overflow:visible;" width="10" height="6" viewBox="0 0 10 6"><path d="M0.5 5 L4.75 0.5 L9 5 Z" fill="#a3a3a3"/></svg>
<svg style="position:absolute;left:1428px;top:853px;overflow:visible;" width="10" height="6" viewBox="0 0 10 6"><path d="M0.5 0.5 L4.75 5 L9 0.5 Z" fill="#505050"/></svg>
<svg style="position:absolute;left:0;top:0" width="1440" height="860"><line x1="563" y1="282.5" x2="736.905083640671" y2="114.63974546983357" stroke="#fe0000" stroke-width="5.2" stroke-linecap="round"/><polygon points="750,102 737.1961544588479,126.17253688296535 725.3897988002121,113.94102160227345" fill="#fe0000"/><line x1="884" y1="96" x2="1172.7939129834094" y2="195.56783601225388" stroke="#fe0000" stroke-width="5.6" stroke-linecap="round"/><polygon points="1190,201.5 1162.6493595424618,201.06128988789126 1168.190391838708,184.98967014711982" fill="#fe0000"/><line x1="1236" y1="229" x2="1017.5955614121883" y2="263.38708182020866" stroke="#fe0000" stroke-width="5.2" stroke-linecap="round"/><polygon points="1001,266 1023.3859327002557,253.87069593341704 1026.0299570488542,270.66382355289335" fill="#fe0000"/><line x1="951.5" y1="293.5" x2="1015.6094772783515" y2="397.8944866492075" stroke="#fe0000" stroke-width="4.4" stroke-linecap="round"/><polygon points="1025.5,414 1003.2753179726435,395.96355054943194 1019.4660456797894,386.02069701973244" fill="#fe0000"/></svg>
<div style="position:absolute;left:1334px;top:67px;width:83.70000000000005px;height:58.599999999999994px;box-sizing:border-box;border-style:solid;border-color:#fe0000;border-width:5.6px 4.7px;border-radius:2px;"></div>
<div style="position:absolute;left:1233.2px;top:192.3px;width:74.09999999999991px;height:42.19999999999999px;box-sizing:border-box;border-style:solid;border-color:#fe0000;border-width:4.8px 4.5px;border-radius:2px;"></div>
<div style="position:absolute;left:858.8px;top:243.8px;width:124.40000000000009px;height:40.19999999999999px;box-sizing:border-box;border-style:solid;border-color:#fe0000;border-width:4.4px 4.4px;border-radius:2px;"></div>
</body></html>
